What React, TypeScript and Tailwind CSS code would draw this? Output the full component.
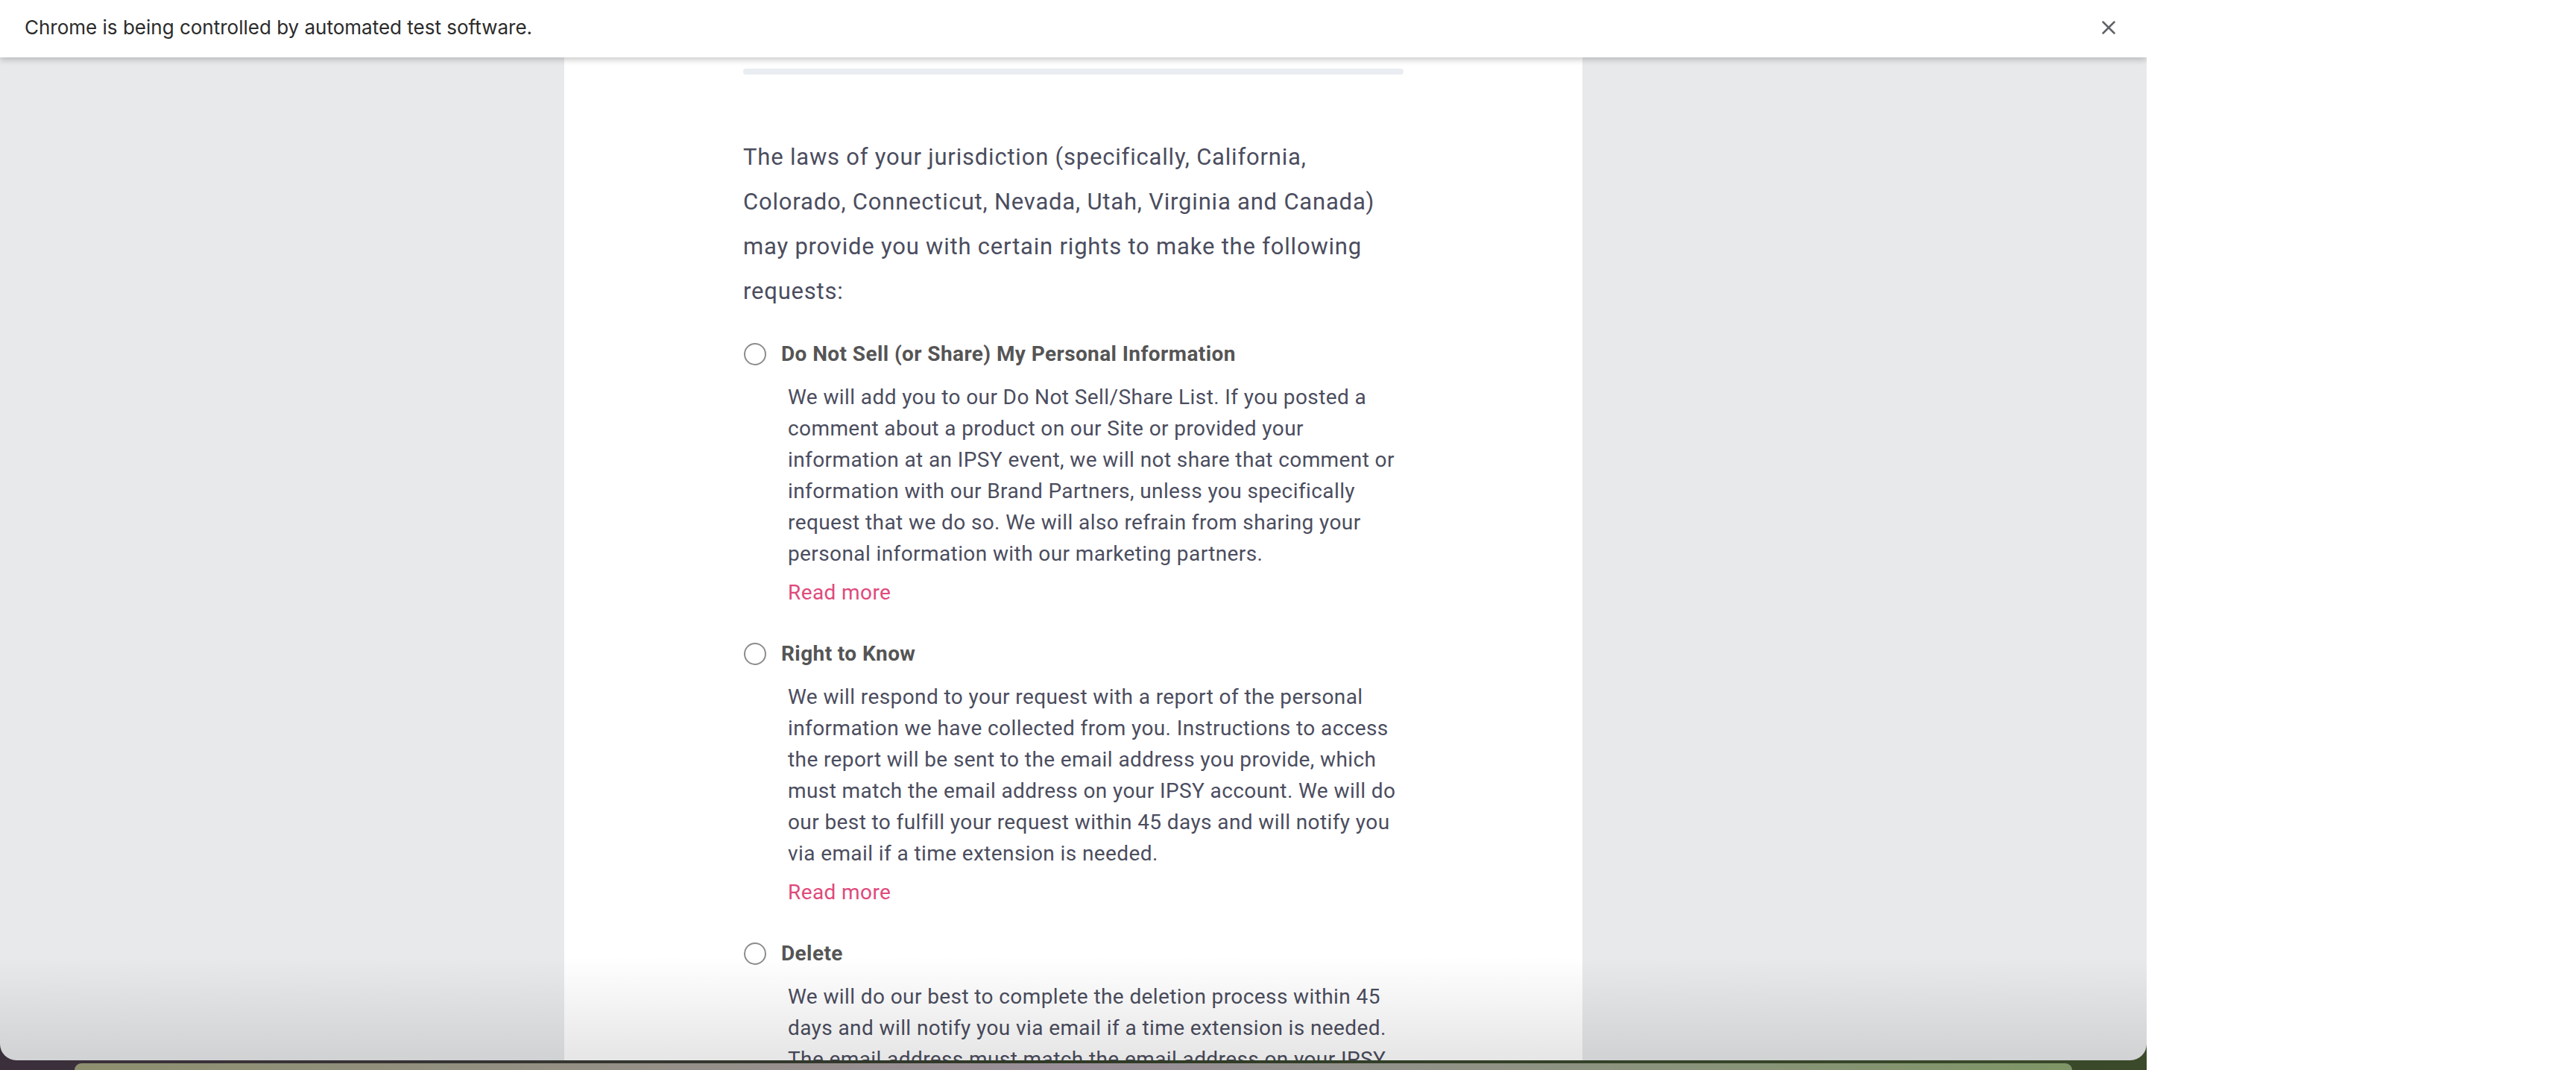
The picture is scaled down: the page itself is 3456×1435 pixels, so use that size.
import { X } from "lucide-react";

const intro = [
  "The laws of your jurisdiction (specifically, California,",
  "Colorado, Connecticut, Nevada, Utah, Virginia and Canada)",
  "may provide you with certain rights to make the following",
  "requests:",
];

const options = [
  {
    title: "Do Not Sell (or Share) My Personal Information",
    lines: [
      "We will add you to our Do Not Sell/Share List. If you posted a",
      "comment about a product on our Site or provided your",
      "information at an IPSY event, we will not share that comment or",
      "information with our Brand Partners, unless you specifically",
      "request that we do so. We will also refrain from sharing your",
      "personal information with our marketing partners.",
    ],
    more: true,
  },
  {
    title: "Right to Know",
    lines: [
      "We will respond to your request with a report of the personal",
      "information we have collected from you. Instructions to access",
      "the report will be sent to the email address you provide, which",
      "must match the email address on your IPSY account. We will do",
      "our best to fulfill your request within 45 days and will notify you",
      "via email if a time extension is needed.",
    ],
    more: true,
  },
  {
    title: "Delete",
    lines: [
      "We will do our best to complete the deletion process within 45",
      "days and will notify you via email if a time extension is needed.",
      "The email address must match the email address on your IPSY",
    ],
    more: false,
  },
];

function Option({ title, lines, more }: { title: string; lines: string[]; more: boolean }) {
  return (
    <div className="flex flex-col">
      <div className="flex items-center h-[40px]">
        <span className="w-[30px] h-[30px] rounded-full border-2 border-[#8c8c8c] bg-white shrink-0 ml-[1px]" />
        <span className="ml-[20px] text-[28px] font-bold text-[#555555] leading-[40px] tracking-[0.4px]">
          {title}
        </span>
      </div>
      <div className="pl-[60px] mt-[17px] text-[28px] leading-[42px] text-[#4b4d5e] tracking-[0.4px]">
        {lines.map((l) => (
          <span key={l} className="block whitespace-nowrap">
            {l}
          </span>
        ))}
        {more && (
          <a href="#" className="block mt-[10px] text-[#df4a7b]">
            Read more
          </a>
        )}
      </div>
    </div>
  );
}

export default function App() {
  return (
    <div className="w-[3456px] h-[1435px] bg-white flex overflow-hidden font-['Roboto',sans-serif]">
      <div className="w-[2880px] h-full flex flex-col bg-gradient-to-r from-[#3b2f3c] via-[#2f3a26] to-[#3a4a2a]">
        <div className="relative h-[1422px] shrink-0 rounded-b-[22px] overflow-hidden bg-[#e8e9eb] flex flex-col">
          <div className="relative z-10 h-[77px] shrink-0 bg-white flex items-center justify-between pl-[33px] pr-[36px] shadow-[0_3px_8px_rgba(0,0,0,0.22)]">
            <span className="text-[26px] text-[#2b2b2b] font-['Inter',sans-serif] -mt-[4px]">
              Chrome is being controlled by automated test software.
            </span>
            <X className="w-[30px] h-[30px] text-[#5f6368] -mt-[4px]" strokeWidth={2} />
          </div>

          <div className="flex-1 flex justify-center overflow-hidden">
            <div className="w-[1366px] bg-white px-[240px] pt-[15px]">
              <div className="h-[8px] rounded-full bg-[#e9ecf1]" />
              <p className="mt-[81px] text-[31px] leading-[60px] text-[#4b4d5e] tracking-[0.8px]">
                {intro.map((l) => (
                  <span key={l} className="block whitespace-nowrap">
                    {l}
                  </span>
                ))}
              </p>
              <div className="mt-[34px] flex flex-col gap-[41px]">
                {options.map((o) => (
                  <Option key={o.title} {...o} />
                ))}
              </div>
            </div>
          </div>

          <div className="absolute left-0 right-0 bottom-0 h-[140px] bg-gradient-to-b from-transparent to-black/10 pointer-events-none" />
        </div>
        <div className="flex-1 pl-[100px] pr-[100px] pt-[4px]">
          <div className="h-full rounded-t-[16px] bg-gradient-to-r from-[#8d8f6e] via-[#9a8f99] to-[#7e9565]" />
        </div>
      </div>
      <div className="flex-1 bg-white" />
    </div>
  );
}
